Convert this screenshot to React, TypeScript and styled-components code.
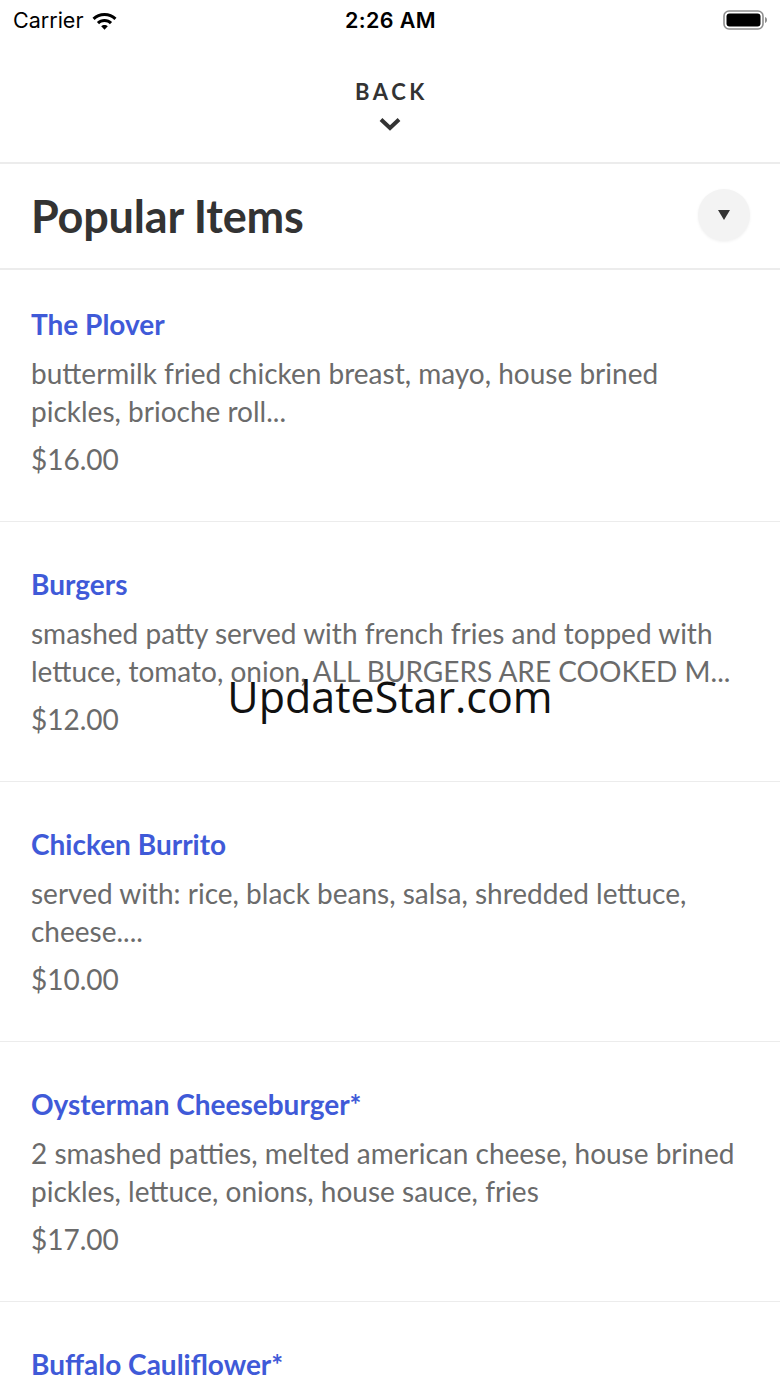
import React from "react";
import styled, { createGlobalStyle } from "styled-components";

const Global = createGlobalStyle`
  html, body { margin: 0; padding: 0; background: #fff; }
  body { font-family: Lato, "Open Sans", sans-serif; -webkit-font-smoothing: antialiased; }
`;

const Page = styled.div`
  position: relative;
  width: 780px;
  height: 1387px;
  overflow: hidden;
  background: #fff;
`;

const StatusBar = styled.div`
  height: 40px;
  display: grid;
  grid-template-columns: 1fr auto 1fr;
  align-items: center;
  padding: 0 12px 0 13px;
  font-family: Inter, "Liberation Sans", sans-serif;
  color: #000;
`;

const StatusLeft = styled.div`
  display: flex;
  align-items: center;
  gap: 8px;
  font-size: 21.5px;
  font-weight: 400;
`;

const StatusTime = styled.div`
  font-size: 21.5px;
  font-weight: 600;
  letter-spacing: 0.4px;
`;

const StatusRight = styled.div`
  display: flex;
  justify-content: flex-end;
  align-items: center;
`;

const Nav = styled.div`
  height: 124px;
  border-bottom: 2px solid #ececec;
  display: flex;
  flex-direction: column;
  align-items: center;
  padding-top: 40px;
  box-sizing: border-box;
`;

const BackLabel = styled.div`
  font-size: 22px;
  font-weight: 700;
  letter-spacing: 3.6px;
  color: #333;
  line-height: 24px;
  padding-left: 3px;
`;

const Chevron = styled.svg`
  margin-top: 13px;
`;

const Header = styled.div`
  height: 106px;
  display: flex;
  align-items: center;
  justify-content: space-between;
  padding: 0 31px;
  border-bottom: 2px solid #ececec;
  box-sizing: border-box;
`;

const HeaderTitle = styled.h1`
  margin: 0;
  font-size: 45px;
  font-weight: 700;
  color: #333;
  letter-spacing: -0.2px;
`;

const CircleButton = styled.button`
  width: 52px;
  height: 52px;
  border-radius: 50%;
  border: none;
  background: #f3f3f3;
  box-shadow: 0 1px 3px rgba(0, 0, 0, 0.06);
  display: flex;
  align-items: center;
  justify-content: center;
  padding: 0;
  margin-right: -1px;
  margin-top: -2px;
`;

const List = styled.div`
  display: flex;
  flex-direction: column;
`;

const Item = styled.div`
  padding: 46px 31px 43px;
  border-bottom: 1px solid #ececec;
  display: flex;
  flex-direction: column;
  &:first-child { padding-top: 38px; }
`;

const ItemTitle = styled.div`
  font-size: 28px;
  line-height: 32px;
  font-weight: 700;
  color: #3f5ad8;
`;

const ItemDesc = styled.div`
  margin-top: 14px;
  font-size: 28px;
  line-height: 38px;
  color: #6b6b6b;
  display: -webkit-box;
  -webkit-line-clamp: 2;
  -webkit-box-orient: vertical;
  overflow: hidden;
`;

const ItemPrice = styled.div`
  margin-top: 10px;
  font-size: 28px;
  line-height: 38px;
  color: #6b6b6b;
`;

const Watermark = styled.div`
  position: absolute;
  left: 0;
  right: 0;
  top: 668px;
  text-align: center;
  font-family: "Open Sans", sans-serif;
  font-size: 43px;
  line-height: 58px;
  color: #111;
  pointer-events: none;
`;

const items = [
  {
    title: "The Plover",
    desc: "buttermilk fried chicken breast, mayo, house brined pickles, brioche roll...",
    price: "$16.00",
  },
  {
    title: "Burgers",
    desc: "smashed patty served with french fries and topped with lettuce, tomato, onion, ALL BURGERS ARE COOKED M...",
    price: "$12.00",
  },
  {
    title: "Chicken Burrito",
    desc: "served with: rice, black beans, salsa, shredded lettuce, cheese....",
    price: "$10.00",
  },
  {
    title: "Oysterman Cheeseburger*",
    desc: "2 smashed patties, melted american cheese, house brined pickles, lettuce, onions, house sauce, fries",
    price: "$17.00",
  },
  {
    title: "Buffalo Cauliflower*",
    desc: "",
    price: "",
  },
];

export default function App() {
  return (
    <Page>
      <Global />
      <StatusBar>
        <StatusLeft>
          Carrier
          <svg width="27" height="20" viewBox="0 0 27 20">
            <path d="M13.5 3C8.8 3 4.6 4.8 1.5 7.8L3.6 10C6.2 7.5 9.7 6 13.5 6s7.3 1.5 9.9 4l2.1-2.2C22.4 4.8 18.2 3 13.5 3z" fill="#000" />
            <path d="M13.5 9c-2.9 0-5.6 1.1-7.6 3l2.2 2.2c1.4-1.3 3.3-2.2 5.4-2.2s4 .9 5.4 2.2l2.2-2.2C19.1 10.1 16.4 9 13.5 9z" fill="#000" />
            <path d="M13.5 15c-1.3 0-2.5.5-3.3 1.3l3.3 3.4 3.3-3.4C16 15.5 14.8 15 13.5 15z" fill="#000" />
          </svg>
        </StatusLeft>
        <StatusTime>2:26 AM</StatusTime>
        <StatusRight>
          <svg width="45" height="20" viewBox="0 0 45 20">
            <rect x="1" y="1" width="39" height="18" rx="5" fill="none" stroke="#8e8e8e" strokeWidth="1.6" />
            <rect x="3.5" y="3.5" width="34" height="13" rx="3" fill="#000" />
            <path d="M42 7v6c1.3-.4 2-1.6 2-3s-.7-2.6-2-3z" fill="#8e8e8e" />
          </svg>
        </StatusRight>
      </StatusBar>
      <Nav>
        <BackLabel>BACK</BackLabel>
        <Chevron width="24" height="14" viewBox="0 0 24 14">
          <path d="M3 2.5l9 8.5 9-8.5" fill="none" stroke="#333" strokeWidth="4" strokeLinejoin="miter" />
        </Chevron>
      </Nav>
      <Header>
        <HeaderTitle>Popular Items</HeaderTitle>
        <CircleButton aria-label="toggle">
          <svg width="12" height="10" viewBox="0 0 12 10">
            <path d="M0 0h12L6 10z" fill="#333" />
          </svg>
        </CircleButton>
      </Header>
      <List>
        {items.map((it) => (
          <Item key={it.title}>
            <ItemTitle>{it.title}</ItemTitle>
            {it.desc && <ItemDesc>{it.desc}</ItemDesc>}
            {it.price && <ItemPrice>{it.price}</ItemPrice>}
          </Item>
        ))}
      </List>
      <Watermark>UpdateStar.com</Watermark>
    </Page>
  );
}
